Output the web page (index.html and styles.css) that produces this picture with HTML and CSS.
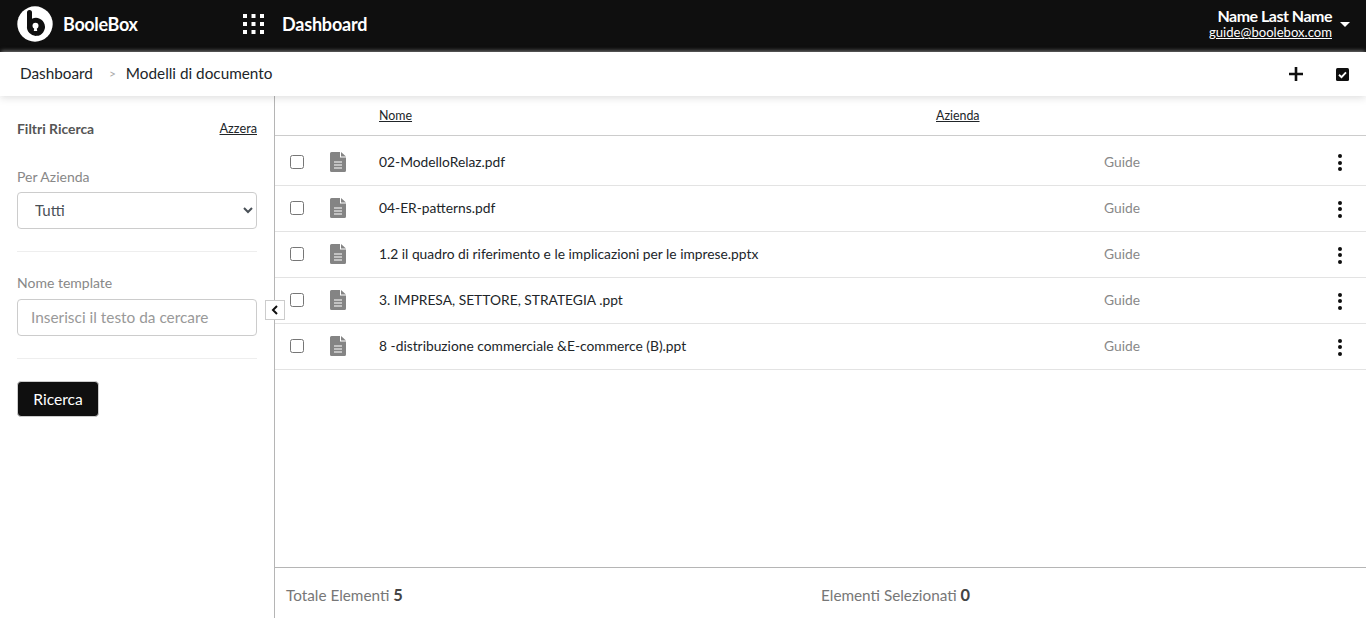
FILE: index.html
```html
<!DOCTYPE html>
<html lang="it">
<head>
<meta charset="utf-8">
<title>BooleBox</title>
<link rel="stylesheet" href="styles.css">
</head>
<body>
<header class="topbar">
  <div class="brand">
    <svg class="logo" viewBox="0 0 36 36" width="36" height="36"><circle cx="18" cy="18" r="17.7" fill="#fff"/><path d="M10 6.500a2.500 2.500 0 0 1 5 0v6.300a9 9 0 1 1-5 7z" fill="#0f0f0f"/><circle cx="18.500" cy="19.800" r="3" fill="#fff"/><path d="M17.500 20.500h2l.7 4.500h-3.400z" fill="#fff"/></svg>
    <span class="brand-name">BooleBox</span>
  </div>
  <div class="apps">
    <svg class="grid-icon" viewBox="0 0 21 20" width="21" height="20" fill="#fff"><rect x="0" y="0" width="4" height="4"/><rect x="8.500" y="0" width="4" height="4"/><rect x="17" y="0" width="4" height="4"/><rect x="0" y="8" width="4" height="4"/><rect x="8.500" y="8" width="4" height="4"/><rect x="17" y="8" width="4" height="4"/><rect x="0" y="16" width="4" height="4"/><rect x="8.500" y="16" width="4" height="4"/><rect x="17" y="16" width="4" height="4"/></svg>
    <span class="page-title">Dashboard</span>
  </div>
  <div class="user">
    <div class="user-text">
      <div class="user-name">Name Last Name</div>
      <a class="user-mail">guide@boolebox.com</a>
    </div>
    <span class="caret"></span>
  </div>
</header>
<nav class="crumbbar">
  <span class="crumb">Dashboard</span>
  <span class="crumb-sep">&gt;</span>
  <span class="crumb">Modelli di documento</span>
  <div class="crumb-actions">
    <svg viewBox="0 0 14 14" width="14" height="14"><path d="M7 0v14M0 7h14" stroke="#0f0f0f" stroke-width="2.6"/></svg>
    <svg viewBox="0 0 13 13" width="13" height="13"><rect width="13" height="13" rx="1.5" fill="#0f0f0f"/><path d="M3 6.800l2.500 2.400L10 4.300" stroke="#fff" stroke-width="1.9" fill="none"/></svg>
  </div>
</nav>
<main class="layout">
  <aside class="filters">
    <div class="filters-head"><strong>Filtri Ricerca</strong><a class="reset">Azzera</a></div>
    <label class="field-label field-first">Per Azienda</label>
    <select class="control select"><option>Tutti</option></select>
    <hr class="sep">
    <label class="field-label field-second">Nome template</label>
    <input class="control input" placeholder="Inserisci il testo da cercare">
    <hr class="sep">
    <button class="search-btn">Ricerca</button>
    <button class="collapse" aria-label="Chiudi"><svg viewBox="0 0 10 10" width="10" height="10"><path d="M7 1L3 5l4 4" stroke="#0f0f0f" stroke-width="2" fill="none"/></svg></button>
  </aside>
  <section class="content">
    <div class="thead"><a class="col-name">Nome</a><a class="col-company">Azienda</a></div>
    <div class="rows">
      <div class="row"><input type="checkbox" class="check"><svg class="file" viewBox="0 0 16 20" width="16" height="20"><path d="M0 1.500A1.500 1.500 0 0 1 1.500 0H10v5.500h6v13a1.500 1.500 0 0 1-1.500 1.500h-13A1.500 1.500 0 0 1 0 18.500z" fill="#848484"/><path d="M11 0l5 4.500h-5z" fill="#848484"/><path d="M4 10h8M4 13h8M4 16h8" stroke="#fff" stroke-width="1.200"/></svg><span class="name">02-ModelloRelaz.pdf</span><span class="company">Guide</span><span class="more"><i></i><i></i><i></i></span></div>
      <div class="row"><input type="checkbox" class="check"><svg class="file" viewBox="0 0 16 20" width="16" height="20"><path d="M0 1.500A1.500 1.500 0 0 1 1.500 0H10v5.500h6v13a1.500 1.500 0 0 1-1.500 1.500h-13A1.500 1.500 0 0 1 0 18.500z" fill="#848484"/><path d="M11 0l5 4.500h-5z" fill="#848484"/><path d="M4 10h8M4 13h8M4 16h8" stroke="#fff" stroke-width="1.200"/></svg><span class="name">04-ER-patterns.pdf</span><span class="company">Guide</span><span class="more"><i></i><i></i><i></i></span></div>
      <div class="row"><input type="checkbox" class="check"><svg class="file" viewBox="0 0 16 20" width="16" height="20"><path d="M0 1.500A1.500 1.500 0 0 1 1.500 0H10v5.500h6v13a1.500 1.500 0 0 1-1.500 1.500h-13A1.500 1.500 0 0 1 0 18.500z" fill="#848484"/><path d="M11 0l5 4.500h-5z" fill="#848484"/><path d="M4 10h8M4 13h8M4 16h8" stroke="#fff" stroke-width="1.200"/></svg><span class="name">1.2 il quadro di riferimento e le implicazioni per le imprese.pptx</span><span class="company">Guide</span><span class="more"><i></i><i></i><i></i></span></div>
      <div class="row"><input type="checkbox" class="check"><svg class="file" viewBox="0 0 16 20" width="16" height="20"><path d="M0 1.500A1.500 1.500 0 0 1 1.500 0H10v5.500h6v13a1.500 1.500 0 0 1-1.500 1.500h-13A1.500 1.500 0 0 1 0 18.500z" fill="#848484"/><path d="M11 0l5 4.500h-5z" fill="#848484"/><path d="M4 10h8M4 13h8M4 16h8" stroke="#fff" stroke-width="1.200"/></svg><span class="name">3. IMPRESA, SETTORE, STRATEGIA .ppt</span><span class="company">Guide</span><span class="more"><i></i><i></i><i></i></span></div>
      <div class="row"><input type="checkbox" class="check"><svg class="file" viewBox="0 0 16 20" width="16" height="20"><path d="M0 1.500A1.500 1.500 0 0 1 1.500 0H10v5.500h6v13a1.500 1.500 0 0 1-1.500 1.500h-13A1.500 1.500 0 0 1 0 18.500z" fill="#848484"/><path d="M11 0l5 4.500h-5z" fill="#848484"/><path d="M4 10h8M4 13h8M4 16h8" stroke="#fff" stroke-width="1.200"/></svg><span class="name">8 -distribuzione commerciale &amp;E-commerce (B).ppt</span><span class="company">Guide</span><span class="more"><i></i><i></i><i></i></span></div>
    </div>
    <footer class="totals">
      <span class="total">Totale Elementi <b>5</b></span>
      <span class="selected">Elementi Selezionati <b>0</b></span>
    </footer>
  </section>
</main>
</body>
</html>
```
FILE: styles.css
```css
* { box-sizing: border-box; }
html, body { height: 100%; }
body {
  margin: 0;
  height: 618px;
  overflow: hidden;
  display: flex;
  flex-direction: column;
  font-family: Lato, "Liberation Sans", sans-serif;
  color: #212529;
  background: #fff;
}
.topbar {
  height: 52px;
  flex: none;
  background: #0f0f0f;
  color: #fff;
  display: flex;
  align-items: center;
  padding: 0 16px 4px 17px;
}
.brand { display: flex; align-items: center; width: 226px; }
.logo { display: block; }
.brand-name { margin-left: 10px; font-size: 18px; font-weight: 700; letter-spacing: -0.35px; }
.apps { display: flex; align-items: center; }
.page-title { margin-left: 18px; font-size: 18px; font-weight: 700; letter-spacing: -0.2px; }
.user { margin-left: auto; display: flex; align-items: center; }
.user-text { text-align: right; }
.user-name { font-size: 16px; font-weight: 700; line-height: 16px; letter-spacing: -0.5px; }
.user-mail { display: block; font-size: 13.1px; line-height: 16px; text-decoration: underline; }
.caret {
  margin-left: 8px;
  border-left: 5px solid transparent;
  border-right: 5px solid transparent;
  border-top: 5px solid #fff;
}
.crumbbar {
  height: 44px;
  flex: none;
  position: relative;
  z-index: 2;
  background: #fff;
  box-shadow: 0 -2px 4px -1px rgba(200,200,200,.6), 0 2px 8px rgba(0,0,0,.12);
  display: flex;
  align-items: center;
  padding: 0 17px 2px 20px;
  font-size: 15.3px;
  color: #212529;
}
.crumb-sep { margin: 0 10px 0 16px; font-size: 12px; color: #aaa; }
.crumb-actions { margin-left: auto; display: flex; align-items: center; gap: 33px; padding-top: 2px; }
.crumb-actions svg { display: block; }
.layout { flex: 1; min-height: 0; display: flex; }
.filters {
  width: 275px;
  flex: none;
  position: relative;
  border-right: 1px solid #b5b5b5;
  padding: 24px 17px 0;
  display: flex;
  flex-direction: column;
  align-items: flex-start;
}
.filters-head {
  width: 100%;
  display: flex;
  justify-content: space-between;
  align-items: center;
  height: 16px;
  font-size: 13.9px;
  color: #555;
}
.reset { font-size: 12.7px; color: #212529; text-decoration: underline; }
.field-label { font-size: 14px; line-height: 20px; color: #888; margin-bottom: 5px; }
.field-first { margin-top: 31px; }
.field-second { margin-bottom: 6px; }
.control {
  width: 240px;
  height: 37px;
  border: 1px solid #ccc;
  border-radius: 4px;
  background-color: #fff;
  font-family: inherit;
  font-size: 15px;
  color: #495057;
  display: block;
  outline: none;
}
.select { padding: 0 0 2px 13px; }
.input { padding: 0 13px 2px; font-size: 15.4px; }
.input::placeholder { color: #999; opacity: 1; }
.sep { width: 240px; margin: 22px 0 21px; border: 0; border-top: 1px solid #eee; height: 1px; }
.search-btn {
  width: 82px;
  height: 36px;
  margin-top: 1px;
  background: #0f0f0f;
  color: #fff;
  border: 1px solid #ccc;
  border-radius: 4px;
  font-family: inherit;
  font-size: 15.6px;
  padding: 0;
}
.collapse {
  position: absolute;
  left: 265px;
  top: 204px;
  width: 20px;
  height: 20px;
  padding: 0;
  background: #fff;
  border: 1px solid #ccc;
  display: flex;
  align-items: center;
  justify-content: center;
}
.content { flex: 1; min-width: 0; display: flex; flex-direction: column; }
.thead {
  height: 40px;
  flex: none;
  border-bottom: 1px solid #ccc;
  display: flex;
  align-items: center;
  font-size: 12.4px;
  padding-left: 104px;
}
.col-name, .col-company { text-decoration: underline; color: #212529; }
.col-name { width: 557px; }
.rows { flex: 1; min-height: 0; }
.row {
  height: 46px;
  border-bottom: 1px solid #e3e3e3;
  display: flex;
  align-items: center;
  font-size: 13.8px;
  padding: 0 0 1px 15px;
}
.row:first-child { height: 50px; padding-top: 2px; padding-bottom: 0; }
.check {
  width: 14px;
  height: 14px;
  margin: 0;
  flex: none;
  appearance: none;
  border: 1px solid #767676;
  border-radius: 2.5px;
  background: #fff;
}
.file { flex: none; margin-left: 26px; }
.name { margin: 0 0 2px 33px; width: 725px; color: #212529; }
.company { color: #888; width: 190px; margin-bottom: 2px; }
.row:first-child .name, .row:first-child .company { margin-bottom: 0; }
.more { display: flex; flex-direction: column; gap: 2.5px; margin: 2px 0 0 44px; }
.more i { display: block; width: 4px; height: 4px; border-radius: 50%; background: #0f0f0f; }
.totals {
  height: 51px;
  flex: none;
  border-top: 1px solid #b5b5b5;
  display: flex;
  align-items: center;
  font-size: 15.3px;
  color: #777;
  padding: 3px 0 0 11px;
}
.totals b { color: #444; font-size: 16.4px; }
.total { width: 535px; }
```
